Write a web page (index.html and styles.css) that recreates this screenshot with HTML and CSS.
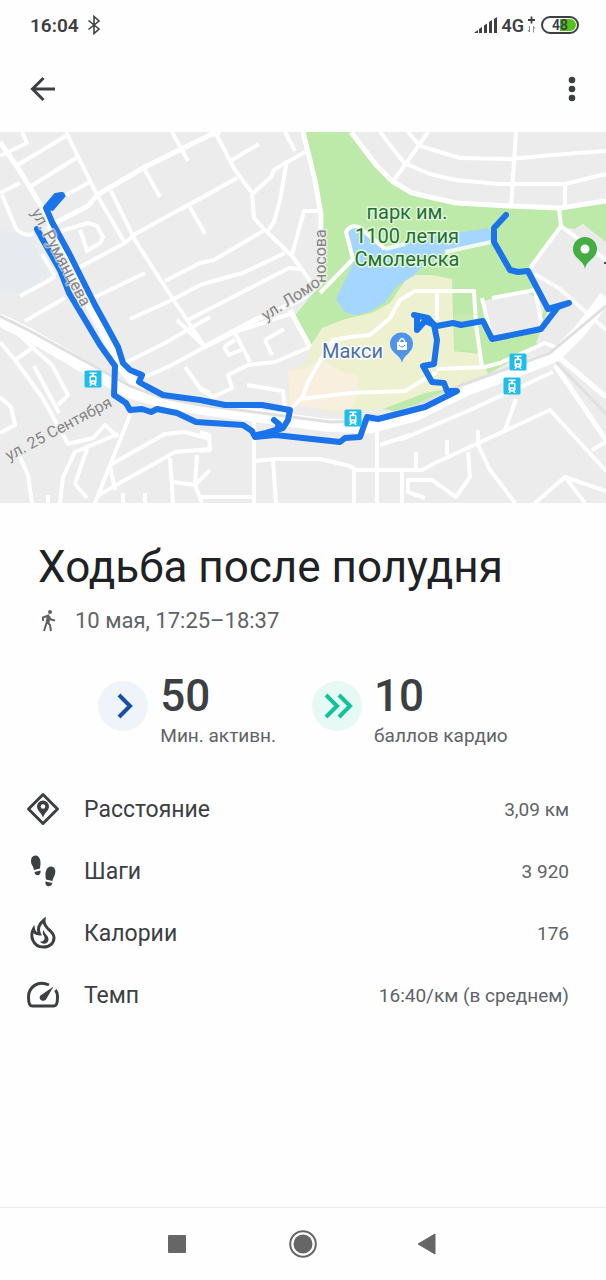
FILE: index.html
```
<!DOCTYPE html>
<html lang="ru">
<head>
  <meta charset="UTF-8">
  <meta name="viewport" content="width=device-width, initial-scale=1.0">
  <title>Ходьба после полудня</title>
  <link rel="stylesheet" href="styles.css">
</head>
<body>
  <div class="status-bar">
    <div class="status-group">
      <span>16:04</span>
      <svg class="bluetooth" width="14" height="20" viewBox="0 0 14 20" fill="none" stroke="currentColor" stroke-width="1.6">
        <path d="M1.500 5.500 L12 14 L7 18.500 V1.500 L12 6 L1.500 14.500"/>
      </svg>
    </div>
    <div class="status-group status-right">
      <svg width="24" height="18" viewBox="0 0 24 18" fill="currentColor">
        <path d="M0 17 l4-3 v3z M5 13 l3-2 v6 h-3z M10 9.500 l3-2 v9.500 h-3z M15 6 l3-2 v13 h-3z M20 3 l3-2 v16 h-3z"/>
      </svg>
      <span class="network">4G</span>
      <svg width="9" height="18" viewBox="0 0 9 18" fill="none" stroke="currentColor">
        <path d="M4.500 0.500 v7 M1 4 h7" stroke-width="1.800"/>
        <path d="M2.500 10 v6 l-1.500 -2 M6.500 16.500 v-6 l1.500 2" stroke-width="0.600"/>
      </svg>
      <span class="battery">48</span>
    </div>
  </div>

  <header class="app-bar">
    <button class="icon-button" type="button" aria-label="Назад">
      <svg width="26" height="26" viewBox="0 0 26 26" fill="none" stroke="currentColor" stroke-width="3">
        <path d="M13.500 2 L2.500 13 L13.500 24 M2.500 13 H25"/>
      </svg>
    </button>
    <button class="icon-button" type="button" aria-label="Ещё">
      <svg width="8" height="26" viewBox="0 0 8 26" fill="currentColor">
        <circle cx="4" cy="4" r="3.300"/><circle cx="4" cy="13" r="3.300"/><circle cx="4" cy="22" r="3.300"/>
      </svg>
    </button>
  </header>

  <main>
    <svg class="map" viewBox="0 132 606 371" role="img" aria-label="Карта маршрута">
      <defs>
        <g id="tram">
          <rect x="-8.500" y="-8.500" width="17" height="17" rx="1.500" fill="#1fbdee"/>
          <path d="M-3.500 -6.500 H3.500 V-5 H1 V-3.500 H2 Q3.500 -3.500 3.500 -2 V4 L2.500 5 L3.800 7 H2 L1.200 5.500 H-1.200 L-2 7 H-3.800 L-2.500 5 L-3.500 4 V-2 Q-3.500 -3.500 -2 -3.500 H-1 V-5 H-3.500z" fill="#fff"/>
          <path d="M-2 -1.800 H2 V1.200 H-2z M-0.800 2.800 h1.600 v1.200 h-1.600z" fill="#1fbdee"/>
        </g>
      </defs>

      <rect y="132" width="606" height="371" fill="#ececec"/>
      <path d="M0 228 L14 232 L32 238 L50 280 L25 295 L0 290z" fill="#e7eaef"/>

      <!-- park, pond, shopping area -->
      <path d="M305 132 H351 L376 165 L392 181 L412 193 L456 203 L510 206 L560 208 L606 201 V245 L583 224 L575 229 L562 228 L530 268 L548 309 L540 345 L456 392 L400 400 L310 347 L292 319 L320 285 L322 215z" fill="#bdeaa9"/>
      <path d="M346 232 Q350 224 360 226 L385 249 L430 237 L489 228 L492 240 L447 251 L420 269 L409 280 L398 285 L386 301 Q371 313 357 315 Q349 315 344 311 L336 299 L354 262z" fill="#a5d6ff"/>
      <path d="M310 347 L322 328 L345 319 L372 313 L390 303 L405 281 L415 275 L432 275 L452 279 L454 351 L480 354 L488 374 L456 386 L400 406 L345 415 L288 402 V371 L306 364z" fill="#eef1cf"/>
      <path d="M288 371 L306 369 L320 359 L345 373 L358 375 V392 L350 412 L290 405z" fill="#f8efdf"/>
      <path d="M454 315 H478 V349 L455 352z" fill="#c5ebb0"/>
      <path d="M383 409 L425 393 L470 385 L440 398 L400 412z" fill="#bdeaa9"/>
      <path d="M483 301 L526 291 L545 304 L540 326 L492 337z" fill="#ebebec"/>
      <path d="M562 227 L575 229 L583 224 L606 242 V310 L560 357 L536 343 L541 330 L548 309 L530 268z" fill="#ebebeb"/>

      <g class="roads">
        <path d="M0 156 L27 143 L22 132 M16 166 L66 136 M28 188 L76 158 M0 193 L20 183 M55 201 L90 182"/>
        <path d="M66 132 L97 195 L125 243 M145 170 L160 197 M172 132 L188 161 M2 195 L15 226 Q20 237 34 234"/>
        <path d="M111 191 L135 240 L165 287 L205 347 M60 279 L80 267 L125 243 L135 234 L210 193 M190 207 L205 234"/>
        <path d="M58 232 L88 223 L97 226 L103 237 L100 243 L85 252 M80 230 L87 250 M20 296 L48 281 L55 276 M42 254 L55 276"/>
        <path d="M165 281 L200 263 L214 260 L263 231 M145 273 L91 299 M25 321 L65 298 M130 319 L172 300 L200 285 L217 280 L243 273 L285 253 M188 320 L289 268 L300 269"/>
        <path d="M215 132 L235 170 L252 193 L254 218 L265 230 L293 257 L310 281 M232 160 L259 144 M180 210 L237 178"/>
        <path d="M251 195 L271 177 L274 170 L287 162 L307 151 M287 161 L280 200 L274 222 L267 232 M285 132 L295 151 M320 211 H304 L292 255"/>
        <path d="M320 293 L353 259 L346 232 Q350 224 359 227 L385 249 M380 132 L405 164 M393 181 L405 165 L428 132 M404 163 L430 174 L455 180 L500 184 L565 184 L606 174"/>
        <path d="M408 132 L420 146 L460 158 L510 159 L552 155 L606 151 M516 132 L511 207 M565 184 V207 M559 208 L561 226 L530 268 M561 226 L606 260"/>
        <path d="M385 249 L405 244 M445 252 L491 242 M535 274 L560 289 L606 330" opacity=".8"/>
        <path d="M0 315 L35 350 L52 365 L68 395 L58 405 M0 342 L15 360 L42 397 L68 444 L93 438 L105 425 L118 437 M15 360 L35 346 M34 366 L59 413"/>
        <path d="M0 397 L11 407 L15 425 L0 433 M20 457 L28 475 L32 503 M130 415 L95 503 M60 503 L63 477 L75 452 L118 434 M87 449 L75 484 L87 498"/>
        <path d="M115 490 L110 465 L165 434 L185 432 L210 439 M97 496 L175 452 L210 449 M170 458 L173 503 M197 455 L195 485 L202 503 M173 482 L195 485 L210 470 M48 495 V503 M123 493 V503 M145 493 V503"/>
        <path d="M125 363 L165 343 L210 317 M145 377 L170 366 L203 348 L235 332 L290 314 M185 367 L200 388 L210 393 M177 320 L205 347"/>
        <path d="M310 347 L275 362 L248 365 L228 375 L232 388 L213 397 L200 389 M235 333 L250 362 M224 347 L235 340 M224 347 L229 355 L241 350 M265 340 L284 329 M265 340 L272 355 M247 385 L283 391 L285 410"/>
        <path d="M254 418 V503 M200 497 H253 M200 432 L209 435 L210 450 L200 451 M255 461 L275 459 H320 L350 466 L356 470 H422 L435 463 L550 410 L606 471"/>
        <path d="M273 460 L276 503 M354 470 V503 M377 430 V503 M402 470 V503 M380 445 L410 435 M516 399 L505 430 M478 430 V445 L490 470 L515 503"/>
        <path d="M447 440 V455 M416 452 V468 M468 452 L470 477 L456 497 L432 480 H408 V492 L425 498 M535 503 L565 477 L606 491 M565 477 L585 503 M592 450 L606 442"/>
        <path d="M292 408 L303 396 L309 380 L320 361 L333 340 L350 337 L370 335 L390 318 L400 300 L415 291 H474 L476 325 L482 367 M437 292 V320 M300 399 L350 393 L405 391 L437 372 M437 369 L485 367 L500 363 L545 343 L560 349"/>
        <path d="M492 298 L535 290 L542 326 M482 298 L492 340"/>
      </g>
      <g class="roads roads-wide">
        <path d="M0 142 L16 165 L45 212 L58 240 M142 390 L165 397 M55 223 L88 206 L97 195 L145 167 L210 135 L220 132"/>
        <path d="M303 132 L315 180 L321 215 L320 284 L300 300 L255 320 L204 347 M290 310 L310 347 M351 132 L376 165 L392 181 L412 193 L456 203 L510 206 L560 208 L606 201"/>
        <path d="M555 365 L606 440 M560 358 L606 397"/>
      </g>
      <path class="roads roads-main" d="M50 225 L78 282 L104 333 L122 368 L140 390"/>
      <path class="avenue" d="M0 320 L30 335 L90 370 L130 392 L165 402 L200 408 L325 425 L370 427 L415 415 L465 390 L555 356 L580 331 L606 297"/>
      <path class="rail" d="M0 316 L30 331 L90 364 L130 386 L160 397 L200 405 L330 422 L370 421 L415 406 L465 384 L550 353 L606 306 M556 362 L606 414"/>
      <path class="roads" d="M400 440 L470 410 L553 372"/>

      <g class="route">
        <path d="M62 195 L56 196 L46 208 L52 222 L70 255 L95 305 L105 323 L118 347 L123 363 L130 370 L142 375 L139 382 L146 386 L163 395 L200 400 L225 405 H262 L290 410 L288 420 L283 428 L266 433 L257 435 M274 420 L279 424 L276 432"/>
        <path d="M37 229 L44 242 L60 270 L69 293 L100 345 L115 366 L114 395 L126 403 L130 410 L142 409 L151 412 L157 409 L177 413 L196 422 L243 425 L252 431 L255 437 L275 435 L340 442 L345 438 L360 437 L367 417 L378 419 L425 407 L457 391 L447 391 L444 383 L432 382 L423 366 L434 364 L437 340 L434 325 L428 318 L414 315"/>
        <path d="M417 317 L417 330 L425 321 L437 326 L453 323 L461 325 L483 321 L492 339 L541 329 L558 307 L569 303 L548 309 L528 271 L518 272 L510 270 L494 242 L494 228 L506 215"/>
      </g>
      <path d="M43 209 L60 192 L66 196 L58 205 L53 211z" fill="#1a73e8"/>

      <g class="labels street">
        <text class="halo" transform="translate(31 212) rotate(62)">ул. Румянцева</text>
        <text transform="translate(326 283) rotate(-90)">носова</text>
        <text transform="translate(266 321) rotate(-33)">ул. Ломо</text>
        <text transform="translate(9 461) rotate(-28)">ул. 25 Сентября</text>
      </g>

      <use href="#tram" x="93" y="379"/>
      <use href="#tram" x="353" y="418"/>
      <use href="#tram" x="518" y="362"/>
      <use href="#tram" x="512" y="386"/>

      <path d="M402 363 C401 355 390 353 390 344 A11.500 11.500 0 0 1 413 344 C413 353 403 355 402 363z" fill="#4f94ea"/>
      <path d="M397 342 H407 V350 H397z" fill="#fff"/>
      <path d="M399.500 343 V341 Q402 336 404.500 341 V343" fill="none" stroke="#fff" stroke-width="1.500"/>
      <path d="M399 345 Q402 349 405 345" fill="none" stroke="#4f94ea"/>
      <path d="M585 269 C584 260 573 259 573 249 A11.500 11.500 0 0 1 597 249 C597 259 586 260 585 269z" fill="#44ad43"/>
      <circle cx="585" cy="249" r="4.500" fill="#fff"/>

      <g class="labels park">
        <text x="407" y="219">парк им.</text>
        <text x="407" y="243">1100 летия</text>
        <text x="407" y="266">Смоленска</text>
      </g>
      <g class="labels shop">
        <text x="322" y="358">Макси</text>
      </g>
      <path d="M604 263 h2" stroke="#1d7130" stroke-width="2"/>
    </svg>

    <section class="summary">
      <h1>Ходьба после полудня</h1>
      <p class="date">
        <svg width="18" height="24" viewBox="0 0 18 24" fill="none" stroke="currentColor" stroke-width="2">
          <circle cx="12" cy="3" r="2" fill="currentColor" stroke="none"/>
          <path d="M5 12 V8.500 L10 6.500 L8.500 14 L6 22 M10 6.500 L13 10.500 L17 11.500 M9 13 L12 16 L13 22 M11.500 7 L10.500 14"/>
        </svg>
        <span>10 мая, 17:25–18:37</span>
      </p>
    </section>

    <section class="stats">
      <div class="stat">
        <svg class="badge badge-blue" width="50" height="50" viewBox="0 0 50 50" fill="none" stroke="currentColor" stroke-width="4">
          <path d="M21 14 L32 25 L21 36"/>
        </svg>
        <div>
          <div class="value">50</div>
          <div class="caption">Мин. активн.</div>
        </div>
      </div>
      <div class="stat">
        <svg class="badge badge-green" width="50" height="50" viewBox="0 0 50 50" fill="none" stroke="currentColor" stroke-width="4">
          <path d="M14 14 L25 25 L14 36 M27 14 L38 25 L27 36"/>
        </svg>
        <div>
          <div class="value">10</div>
          <div class="caption">баллов кардио</div>
        </div>
      </div>
    </section>

    <dl class="details">
      <div class="row">
        <dt>
          <svg width="34" height="34" viewBox="0 0 34 34" fill="none" stroke="currentColor" stroke-width="3" stroke-linejoin="round">
            <path d="M17 2.500 L31.500 17 L17 31.500 L2.500 17z"/>
            <path d="M17 26 C16 21 11 19 11 14.500 A6 6 0 0 1 23 14.500 C23 19 18 21 17 26z" fill="currentColor" stroke="none"/>
            <circle cx="17" cy="14.500" r="2.300" fill="#fff" stroke="none"/>
          </svg>
          Расстояние
        </dt>
        <dd>3,09 км</dd>
      </div>
      <div class="row">
        <dt>
          <svg width="34" height="34" viewBox="0 0 34 34" fill="currentColor">
            <path d="M9 1.500 C13 1 15 6 14.500 10 L14 14.500 L8 16 C7.500 12 5 11 5 7 C5 4 6 2 9 1.500z"/>
            <path d="M8.500 18 L14.500 16.500 C15.500 22 9 23 8.500 18z"/>
            <path d="M25 12.500 C29 12.500 30 17 29 20 C28 23 27 24 26.500 27 L20 25.500 C19.500 22 19 20 20 17 C21 14 22.500 12.500 25 12.500z"/>
            <path d="M19.500 27.500 L26.500 29 C25 34 18.500 33 19.500 27.500z"/>
          </svg>
          Шаги
        </dt>
        <dd>3 920</dd>
      </div>
      <div class="row">
        <dt>
          <svg width="34" height="34" viewBox="0 0 34 34" fill="none" stroke="currentColor" stroke-width="3">
            <path d="M18 4 C13 8 11 13 13.500 18 C10 18 8 16 7.500 13 C4 19 6 31 17.500 31 C24 31 28 27 28 21.500 C28 14 17 13 18 4z"/>
            <path d="M18 14 C17.500 18 23 19 22.500 24 C22 28 16 29 14 25.500 C18 26 19.500 23 18 20 C16.500 18 16 16 18 14z" fill="currentColor" stroke="none"/>
          </svg>
          Калории
        </dt>
        <dd>176</dd>
      </div>
      <div class="row">
        <dt>
          <svg width="34" height="34" viewBox="0 0 34 34" fill="none" stroke="currentColor" stroke-width="3">
            <path d="M23 7 C12 2 2.500 9 2.500 19 C2.500 23 3 28 6 28 H28 C31 28 31.500 23 31.500 19 C31.500 16.500 31 14 29.500 12"/>
            <path d="M27.500 8.500 L20 21.500 C17 25 11.500 21 14.500 17.500z" fill="currentColor" stroke="none"/>
          </svg>
          Темп
        </dt>
        <dd>16:40/км (в среднем)</dd>
      </div>
    </dl>
  </main>

  <nav class="nav-bar">
    <button class="nav-button" type="button" aria-label="Недавние">
      <svg width="28" height="28" viewBox="0 0 28 28" fill="currentColor"><rect x="5" y="5" width="18" height="18" rx="1"/></svg>
    </button>
    <button class="nav-button" type="button" aria-label="Домой">
      <svg width="28" height="28" viewBox="0 0 28 28" fill="currentColor">
        <circle cx="14" cy="14" r="9.500"/>
        <circle cx="14" cy="14" r="12.800" fill="none" stroke="currentColor" stroke-width="2"/>
      </svg>
    </button>
    <button class="nav-button" type="button" aria-label="Назад">
      <svg width="28" height="28" viewBox="0 0 28 28" fill="currentColor"><path d="M3 14 L20 4 V24z" stroke="currentColor" stroke-linejoin="round"/></svg>
    </button>
  </nav>
</body>
</html>
```
FILE: styles.css
```
* {
  box-sizing: border-box;
}
body {
  margin: 0;
  min-height: 100vh;
  display: flex;
  flex-direction: column;
  background-color: #fefefe;
  color: #3c4043;
  font-family: Roboto, "Noto Sans", sans-serif;
}
button {
  border: 0;
  padding: 0;
  background: none;
  color: inherit;
}
svg {
  display: block;
  flex: none;
}

.status-bar {
  height: 50px;
  padding: 0 27px 0 30px;
  display: flex;
  justify-content: space-between;
  align-items: center;
  font-size: 19px;
  font-weight: 600;
}
.status-group {
  display: flex;
  align-items: center;
  gap: 8px;
}
.status-right {
  gap: 3px;
}
.network {
  font-size: 18px;
}
.battery {
  width: 38px;
  height: 18px;
  margin-left: 2px;
  border: 2px solid #3c4043;
  border-radius: 9px;
  background: linear-gradient(90deg, #fff 50%, #52c41a 50%) content-box;
  padding: 1px;
  font-size: 14px;
  line-height: 12px;
  text-align: center;
}

.app-bar {
  height: 82px;
  padding: 0 17px 4px;
  display: flex;
  justify-content: space-between;
  align-items: center;
}
.icon-button {
  width: 52px;
  height: 52px;
  display: flex;
  justify-content: center;
  align-items: center;
}
.app-bar .icon-button:last-child {
  width: 34px;
}

main {
  flex: 1;
}
.map {
  width: 100%;
  height: auto;
}
.roads {
  fill: none;
  stroke: #fff;
  stroke-width: 4;
  stroke-linejoin: round;
}
.roads-wide {
  stroke-width: 5;
}
.roads-main {
  stroke-width: 9;
}
.avenue {
  fill: none;
  stroke: #fff;
  stroke-width: 13;
}
.rail {
  fill: none;
  stroke: #e0e0e0;
  stroke-width: 3;
}
.route {
  fill: none;
  stroke: #1a73e8;
  stroke-width: 6;
  stroke-linecap: round;
  stroke-linejoin: round;
}
.labels {
  paint-order: stroke;
  stroke: #fff;
  stroke-width: 3;
  stroke-linejoin: round;
}
.street {
  font-size: 16px;
  fill: #858585;
  stroke: #ececec;
}
.halo {
  stroke: rgba(236, 236, 236, 0.6);
}
.park {
  font-size: 20px;
  fill: #1d7130;
  stroke: #e4f6dc;
  text-anchor: middle;
}
.shop {
  font-size: 20px;
  fill: #4a6fa8;
}

.summary {
  padding: 36px 38px 0;
}
h1 {
  margin: 0;
  color: #202124;
  font-size: 44px;
  font-weight: 400;
  line-height: 56px;
}
.date {
  margin: 12px 0 0;
  display: flex;
  align-items: center;
  gap: 19px;
  color: #5f6368;
  font-size: 22px;
  line-height: 28px;
}

.stats {
  margin-top: 34px;
  display: flex;
  justify-content: center;
  gap: 36px;
}
.stat {
  display: flex;
  gap: 12px;
}
.badge {
  margin-top: 12px;
  border-radius: 50%;
}
.badge-blue {
  background-color: #eff4fb;
  color: #174ea6;
}
.badge-green {
  background-color: #e6f9f4;
  color: #12c29b;
}
.value {
  font-size: 44px;
  font-weight: 500;
  line-height: 54px;
}
.caption {
  color: #5f6368;
  font-size: 19px;
  line-height: 26px;
}

.details {
  margin: 29px 0 0;
  padding: 0 37px 0 26px;
}
.row {
  height: 62px;
  display: flex;
  justify-content: space-between;
  align-items: center;
}
dt {
  display: flex;
  align-items: center;
  gap: 24px;
  font-size: 23px;
}
dd {
  margin: 0;
  color: #5f6368;
  font-size: 19px;
}

.nav-bar {
  height: 73px;
  padding: 0 115px;
  border-top: 1px solid #ececec;
  display: flex;
  justify-content: space-between;
  align-items: center;
  color: #666;
}
.nav-button {
  width: 124px;
  display: flex;
  justify-content: center;
}
```
